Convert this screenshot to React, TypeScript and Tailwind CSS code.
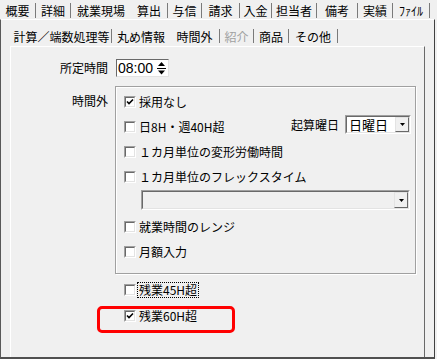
import React from "react";

const tabs = [
  { t: "概要", w: "w-[36px]", sep: true },
  { t: "詳細", w: "w-[35px]", sep: true },
  { t: "就業現場", w: "w-[60px]", sep: false },
  { t: "算出", w: "w-[37px]", sep: true },
  { t: "与信", w: "w-[34px]", sep: true },
  { t: "請求", w: "w-[38px]", sep: true },
  { t: "入金", w: "w-[32px]", sep: true },
  { t: "担当者", w: "w-[45px]", sep: true },
  { t: "備考", w: "w-[41px]", sep: true },
  { t: "実績", w: "w-[35px]", sep: true },
  { t: "ﾌｧｲﾙ", w: "w-[37px]", sep: true },
];

const subTabs = [
  { t: "計算／端数処理等", w: "w-[100px]", sep: true, dis: false },
  { t: "丸め情報", w: "w-[58px]", sep: false, dis: false },
  { t: "時間外", w: "w-[50px]", sep: true, dis: false },
  { t: "紹介", w: "w-[34px]", sep: true, dis: true },
  { t: "商品", w: "w-[35px]", sep: true, dis: false },
  { t: "その他", w: "w-[49px]", sep: true, dis: false },
];

function Check({ checked }: { checked?: boolean }) {
  return (
    <div className="w-[12px] h-[12px] shrink-0 flex border border-t-[#a0a0a0] border-l-[#a0a0a0] border-r-white border-b-white">
      <div className="flex-1 flex items-center justify-center bg-white border border-t-[#696969] border-l-[#696969] border-r-[#e3e3e3] border-b-[#e3e3e3]">
        {checked && (
          <svg width="8" height="8" viewBox="0 0 8 8">
            <path d="M1 3.5 L3 5.5 L7 1.5" stroke="#000" strokeWidth="1.6" fill="none" />
          </svg>
        )}
      </div>
    </div>
  );
}

function DownArrowButton() {
  return (
    <div className="w-[14px] h-full shrink-0 flex items-center justify-center bg-[#f0f0f0] border border-t-[#e3e3e3] border-l-[#e3e3e3] border-r-[#696969] border-b-[#696969]">
      <svg width="5" height="3" viewBox="0 0 5 3">
        <path d="M0 0H5L2.5 3Z" fill="#000" />
      </svg>
    </div>
  );
}

function CheckRow({ label, checked, children }: { label: string; checked?: boolean; children?: React.ReactNode }) {
  return (
    <div className="h-[25px] flex items-center">
      <Check checked={checked} />
      <span className="ml-[3px] leading-[14px] whitespace-nowrap">{label}</span>
      {children}
    </div>
  );
}

export default function App() {
  return (
    <div className="w-[437px] h-[359px] bg-[#f0f0f0] flex flex-col overflow-hidden text-[12px] text-black font-['Noto_Sans_CJK_JP','Noto_Sans',sans-serif]">
      {/* top tab strip */}
      <div className="h-[19px] flex shrink-0">
        {tabs.map((tb) => (
          <div key={tb.t} className={`${tb.w} h-[19px] flex shrink-0`}>
            <span className="flex-1 text-center pt-[2px] leading-[18px] whitespace-nowrap">{tb.t}</span>
            {tb.sep && <div className="w-px h-[15px] mt-[3px] bg-[#7a7a7a]" />}
          </div>
        ))}
      </div>

      {/* outer panel */}
      <div className="w-[435px] flex-1 flex flex-col border-t border-t-white border-l border-l-[#5a5a5a] border-r border-r-[#404040] border-b-2 border-b-[#505050]">
        {/* sub tab strip */}
        <div className="mt-[8px] ml-[11px] h-[18px] flex shrink-0">
          {subTabs.map((tb) => (
            <div key={tb.t} className={`${tb.w} h-[18px] flex shrink-0`}>
              <span className={`flex-1 text-center leading-[18px] whitespace-nowrap ${tb.dis ? "text-[#a0a0a0]" : ""}`}>{tb.t}</span>
              {tb.sep && <div className="w-px h-[14px] mt-[1px] bg-[#7a7a7a]" />}
            </div>
          ))}
        </div>

        {/* inner panel */}
        <div className="ml-[9px] w-[415px] flex-1 flex flex-col border-t border-t-white border-l border-l-white border-r border-r-[#696969]">
          {/* 所定時間 */}
          <div className="mt-[12px] h-[18px] flex items-center">
            <div className="w-[97px] text-right leading-[14px]">所定時間</div>
            <div className="ml-[8px] w-[53px] h-[18px] flex bg-white border border-t-[#696969] border-l-[#696969] border-r-[#e3e3e3] border-b-[#e3e3e3]">
              <span className="pl-[1px] flex-1 leading-[16px] text-[14px] font-['Liberation_Sans',sans-serif]">08:00</span>
              <svg width="13" height="16" viewBox="0 0 13 16" className="shrink-0">
                <path d="M6.5 2 L10 6 H3 Z" fill="#000" />
                <path d="M2 8.5 H11" stroke="#000" strokeWidth="1" />
                <path d="M3 10.5 H10 L6.5 14.5 Z" fill="#000" />
              </svg>
            </div>
          </div>

          {/* 時間外 */}
          <div className="mt-[9px] flex">
            <div className="w-[97px] text-right pt-[8px] leading-[14px]">時間外</div>
            <div className="ml-[7px] w-[301px] h-[188px] flex flex-col pt-[2px] pl-[8px] border border-[#a0a0a0] shadow-[inset_1px_1px_0_#ffffff,1px_1px_0_#ffffff]">
              <CheckRow label="採用なし" checked />
              <CheckRow label="日8H・週40H超">
                <div className="ml-auto mr-[4px] mb-[4px] flex items-center">
                  <span className="leading-[14px]">起算曜日</span>
                  <div className="ml-[6px] w-[66px] h-[19px] flex border border-t-[#a0a0a0] border-l-[#a0a0a0] border-r-white border-b-white">
                    <div className="flex-1 flex bg-white border border-t-[#696969] border-l-[#696969] border-r-[#e3e3e3] border-b-[#e3e3e3]">
                      <span className="flex-1 pl-[2px] text-[13px] leading-[15px]">日曜日</span>
                      <DownArrowButton />
                    </div>
                  </div>
                </div>
              </CheckRow>
              <CheckRow label="１カ月単位の変形労働時間" />
              <CheckRow label="１カ月単位のフレックスタイム" />
              <div className="mt-[1px] ml-[17px] w-[269px] h-[20px] flex border border-t-[#a0a0a0] border-l-[#a0a0a0] border-r-white border-b-white">
                <div className="flex-1 flex justify-end bg-[#f0f0f0] border border-t-[#696969] border-l-[#696969] border-r-[#e3e3e3] border-b-[#e3e3e3]">
                  <DownArrowButton />
                </div>
              </div>
              <div className="mt-[4px]">
                <CheckRow label="就業時間のレンジ" />
              </div>
              <CheckRow label="月額入力" />
            </div>
          </div>

          {/* 残業 */}
          <div className="mt-[3px] ml-[113px] flex flex-col">
            <div className="h-[26px] flex items-center">
              <Check />
              <span className="ml-[1px] px-[1px] leading-[14px] border border-dotted border-black whitespace-nowrap">残業45H超</span>
            </div>
            <div className="relative h-[26px] flex items-center">
              <Check checked />
              <span className="ml-[3px] leading-[14px] whitespace-nowrap">残業60H超</span>
              <div className="absolute left-[-27px] top-[3px] w-[138px] h-[27px] border-[3px] border-[#ff0000] rounded-[5px]" />
            </div>
          </div>
        </div>
      </div>
    </div>
  );
}
